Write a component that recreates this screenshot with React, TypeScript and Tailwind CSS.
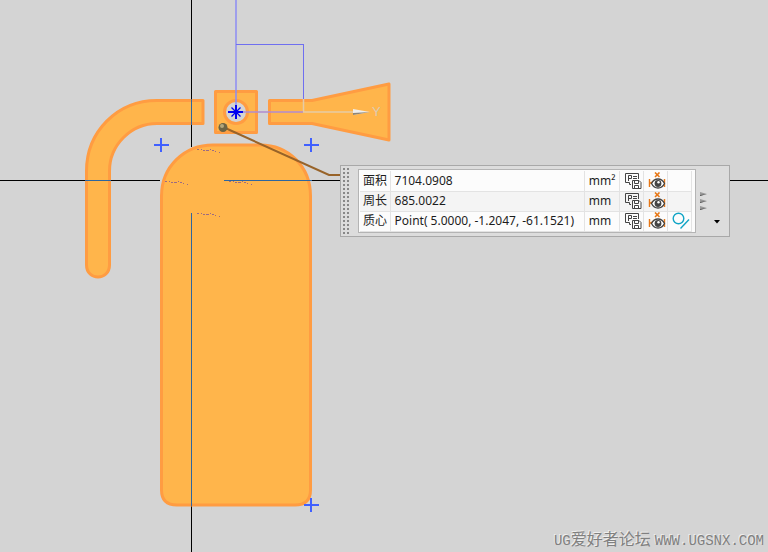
const LINE = "#2d66a0";
const PURPLE = "#6f6ff0";

const rows = [
  { label: "面积", value: "7104.0908", unit: "mm²", point: false },
  { label: "周长", value: "685.0022", unit: "mm", point: false },
  { label: "质心", value: "Point( 5.0000, -1.2047, -61.1521)", unit: "mm", point: true },
];

// control points of the sketch
const markers = [
  [161, 145],
  [311, 145],
  [311, 505],
];

// little scattered marks left around the sketch origin
const dashes = [
  [197, 149],
  [165, 181],
  [229, 181],
  [197, 213],
];

function SaveIcon() {
  return (
    <svg width="18" height="18" viewBox="0 0 18 18" fill="none" stroke="#444">
      <path d="M7 12.5H5.5V10.5H1.5V1.5H14.5V7" />
      <path d="M4.5 9V3.5H7.5V6.5H5M9 4.5H13M9 6.5H13" />
      <path d="M8.5 8.5H15L17 10.5V16.5H8.5Z" fill="#fff" />
      <path d="M10.5 8.5V11.5H14.5V8.5M10.5 16.5V13.5H14.5V16.5" />
    </svg>
  );
}

function EyeIcon() {
  return (
    <svg width="18" height="18" viewBox="0 0 18 18" fill="none">
      <path d="M7 0.5L11.5 5M11.5 0.5L7 5" stroke="#e77817" strokeWidth="1.6" />
      <path d="M1.5 7V15M16.5 7V15M2 11H5" stroke="#e77817" strokeWidth="1.4" />
      <path d="M2 11L6 7.5V12.5Z" fill="#e77817" />
      <path d="M3.5 11.5C6.5 5.5 13.5 5.5 16.5 11.5C13.5 17.5 6.5 17.5 3.5 11.5Z" fill="#fff" stroke="#444" strokeWidth="1.3" />
      <circle cx="10" cy="11.5" r="3.4" fill="#444" />
      <circle cx="10.5" cy="10.2" r="1.2" fill="#fff" />
    </svg>
  );
}

function PointIcon() {
  return (
    <svg width="18" height="18" viewBox="0 0 18 18" fill="none" stroke="#12a5c6" strokeWidth="1.4">
      <circle cx="6.5" cy="6.5" r="5.3" />
      <path d="M8.5 16.5L17 7.5" />
    </svg>
  );
}

function Sketch() {
  return (
    <svg className="absolute inset-0 h-full w-full" role="img" aria-label="Sketch">
      <g fill="none" stroke="#000" shapeRendering="crispEdges">
        <path d="M0 180.5H160" />
        <line x1="312" y1="180.5" x2="100%" y2="180.5" />
        <path d="M191.5 0V147" />
        <line x1="191.5" y1="506" x2="191.5" y2="100%" />
      </g>

      <g fill="#ffb54b" stroke="#ff9c42" strokeWidth="3" strokeLinejoin="round">
        <path d="M203 100.5H157C117 100.5 86.5 132 86.5 171V265C86.5 281 109.5 281 109.5 265V171C109.5 145 131 123.5 157 123.5H203Z" />
        <path
          fillRule="evenodd"
          d="M215.5 91.5H256.5V132.5H215.5ZM236 100.5A11.5 11.5 0 1 0 236 123.5A11.5 11.5 0 1 0 236 100.5Z"
        />
        <path d="M269.5 100.5H312L389 84V140L312 123.5H269.5Z" />
        <path d="M161.5 196C161.5 167 184 145 213 145H260C289 145 310.5 167 310.5 196V490Q310.5 505 295 505H177Q161.5 505 161.5 490Z" />
      </g>

      <g fill="none" stroke={LINE} shapeRendering="crispEdges">
        <path d="M85 180.5H111M224 180.5H312M191.5 99V125M191.5 213V506" />
      </g>

      <g fill="none" stroke="#9b6b83" shapeRendering="crispEdges">
        {dashes.map(([x, y]) => (
          <path
            key={`${x}-${y}`}
            d={`M${x} ${y}.5h2m2 0h1m1 1h2m1 0h3m1 -1h1m1 1h2m1 1h1m3 1h1`}
          />
        ))}
      </g>

      <g fill="none">
        <path d="M303.5 99V112H354" stroke="#e6cba6" strokeWidth="1.5" />
        <path d="M236 0V112" stroke="#8c8cf4" strokeWidth="1.5" />
        <path d="M236 44.5H303.5V99" stroke={PURPLE} shapeRendering="crispEdges" />
        <path d="M236 112H303" stroke="#b08cd0" strokeWidth="1.5" />
      </g>
      <path d="M353 109L370 112L353 115Z" fill="#eee" />
      <path d="M353 113L370 112L353 115Z" fill="#8e8575" />
      <text x="372" y="116" fontSize="13" fill="#dccbb2" className="font-['Liberation_Sans',sans-serif]">
        Y
      </text>

      <g fill="none" stroke="#0000f0">
        <path d="M236 105V119M228 112H243" strokeWidth="2" />
        <path d="M231.5 107.5L240.5 116.5M240.5 107.5L231.5 116.5" strokeWidth="1.3" />
      </g>

      <path d="M223 127L329 175H340" fill="none" stroke="#986329" strokeWidth="2" />
      <circle cx="223" cy="127.5" r="4.5" fill="#6b6445" />
      <circle cx="222" cy="126" r="2" fill="#b1a77c" />

      <g fill="none" stroke="#4060ff" strokeWidth="2">
        {markers.map(([x, y]) => (
          <path key={`${x}-${y}`} d={`M${x - 7} ${y}h15M${x} ${y - 7}v14`} />
        ))}
      </g>
    </svg>
  );
}

function MeasurePanel() {
  return (
    <section
      aria-label="Measure"
      className="absolute top-[165px] left-[340px] flex h-[72px] w-[390px] border border-[#a8a8a8] bg-[#dcdcdc]"
    >
      <svg className="mt-px ml-0.5 h-[68px] w-2 shrink-0" aria-hidden="true">
        <defs>
          <pattern id="grip" width="4" height="4" patternUnits="userSpaceOnUse">
            <rect y="1" width="2" height="2" fill="#888" />
          </pattern>
        </defs>
        <rect width="8" height="68" fill="url(#grip)" />
      </svg>

      <div className="mt-[3px] ml-[7px] h-[64px] w-[338px] shrink-0 border border-[#b4b4b4] bg-[#fcfcfc] p-px">
        <table className="w-[332px] table-fixed border-collapse font-['Noto_Sans','Noto_Sans_CJK_SC',sans-serif] text-[12px] leading-[18px] text-[#1c1c1c]">
          <colgroup>
            <col className="w-[30px]" />
            <col className="w-[194px]" />
            <col className="w-[35px]" />
            <col className="w-[24px]" />
            <col className="w-[24px]" />
            <col className="w-[24px]" />
          </colgroup>
          <tbody>
            {rows.map((row) => (
              <tr key={row.label} className="h-[20px] border-b border-[#e3e3e3] even:bg-[#f4f4f4]">
                <th scope="row" className="border-r border-[#e3e3e3] p-0 pl-[3px] text-left font-normal whitespace-nowrap">
                  {row.label}
                </th>
                <td className="border-r border-[#e3e3e3] p-0 pl-1 whitespace-nowrap">{row.value}</td>
                <td className="border-r border-[#e3e3e3] p-0 pl-1">{row.unit}</td>
                <td className="border-r border-[#e3e3e3] p-0 pl-1">
                  <button aria-label={`Save ${row.label}`} className="block h-[18px]">
                    <SaveIcon />
                  </button>
                </td>
                <td className="border-r border-[#e3e3e3] p-0 pl-1">
                  <button aria-label={`Show ${row.label}`} className="block h-[18px]">
                    <EyeIcon />
                  </button>
                </td>
                <td className="border-r border-[#e3e3e3] p-0 pl-1">
                  {row.point && (
                    <button aria-label="Create point" className="block h-[18px]">
                      <PointIcon />
                    </button>
                  )}
                </td>
              </tr>
            ))}
          </tbody>
        </table>
      </div>

      <button aria-label="More" className="ml-1 self-center">
        <svg width="8" height="20" viewBox="0 0 8 20">
          <path d="M0 1L7 3L0 5ZM0 8L7 10L0 12ZM0 15L7 17L0 19Z" fill="#999" />
          <path d="M0 4L7 3L0 5ZM0 11L7 10L0 12ZM0 18L7 17L0 19Z" fill="#555" />
        </svg>
      </button>
      <button aria-label="Options" className="mb-3 ml-[6px] self-end">
        <svg width="6" height="4" viewBox="0 0 6 4">
          <path d="M0 0H6L3 3.5Z" fill="#000" />
        </svg>
      </button>
    </section>
  );
}

export default function App() {
  return (
    <main className="relative flex min-h-screen flex-col justify-end overflow-hidden bg-[#d4d4d4]">
      <Sketch />
      <MeasurePanel />
      <footer className="relative flex items-center justify-end gap-1 px-1 font-['Liberation_Mono','Noto_Sans_CJK_SC',monospace] text-[14px] leading-[22px] whitespace-nowrap text-[#808080] [text-shadow:-1px_-1px_0_#eeeeee]">
        <span className="flex">
          UG<span className="text-[16px]">爱好者论坛</span>
        </span>
        <span>WWW.UGSNX.COM</span>
      </footer>
    </main>
  );
}
